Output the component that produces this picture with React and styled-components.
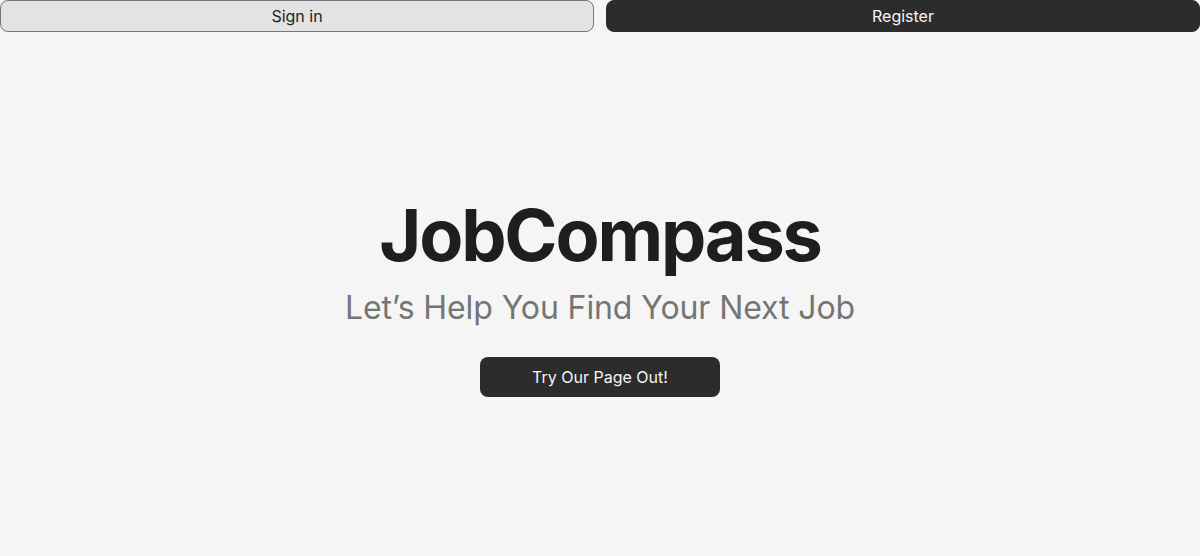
import React from "react";
import styled, { createGlobalStyle } from "styled-components";

const GlobalStyle = createGlobalStyle`
  html, body {
    margin: 0;
    padding: 0;
    background: #f5f5f5;
    font-family: Inter, "Noto Sans", sans-serif;
  }
`;

const Page = styled.div`
  display: flex;
  flex-direction: column;
  min-height: 100vh;
  background: #f5f5f5;
`;

const TopBar = styled.div`
  display: flex;
  gap: 12px;
`;

const NavButton = styled.button`
  flex: 1;
  height: 32px;
  border-radius: 8px;
  font-family: Inter, sans-serif;
  font-size: 16px;
  cursor: pointer;
  border: 1px solid ${(p) => (p.$dark ? "#2c2c2c" : "#767676")};
  background: ${(p) => (p.$dark ? "#2c2c2c" : "#e3e3e3")};
  color: ${(p) => (p.$dark ? "#f5f5f5" : "#1e1e1e")};
`;

const Hero = styled.main`
  flex: 1;
  display: flex;
  flex-direction: column;
  align-items: center;
  justify-content: center;
  padding-top: 1px;
`;

const Title = styled.h1`
  margin: 0 0 10px;
  font-size: 72px;
  font-weight: 700;
  letter-spacing: -2.2px;
  line-height: 1.2;
  color: #1e1e1e;
`;

const Subtitle = styled.p`
  margin: 0;
  font-size: 32px;
  font-weight: 400;
  letter-spacing: -0.1px;
  line-height: 1.2;
  color: #757575;
`;

const CtaButton = styled.button`
  margin-top: 30px;
  width: 240px;
  height: 40px;
  border: none;
  border-radius: 8px;
  background: #2c2c2c;
  color: #f5f5f5;
  font-family: Inter, sans-serif;
  font-size: 16px;
  cursor: pointer;
`;

export default function App() {
  return (
    <Page>
      <GlobalStyle />
      <TopBar>
        <NavButton>Sign in</NavButton>
        <NavButton $dark>Register</NavButton>
      </TopBar>
      <Hero>
        <Title>JobCompass</Title>
        <Subtitle>Let’s Help You Find Your Next Job</Subtitle>
        <CtaButton>Try Our Page Out!</CtaButton>
      </Hero>
    </Page>
  );
}
